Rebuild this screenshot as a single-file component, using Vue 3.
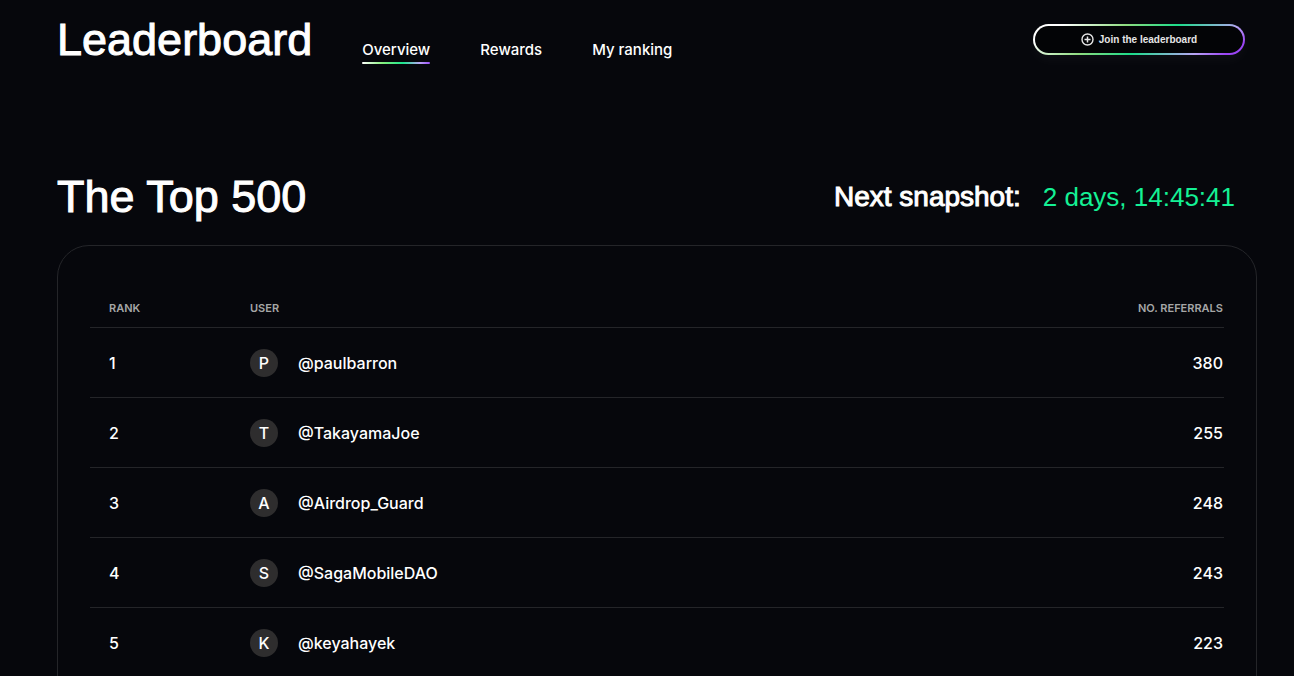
<script setup>
const tabs = ['Overview', 'Rewards', 'My ranking']
const rows = [
  { rank: 1, user: 'paulbarron', referrals: 380 },
  { rank: 2, user: 'TakayamaJoe', referrals: 255 },
  { rank: 3, user: 'Airdrop_Guard', referrals: 248 },
  { rank: 4, user: 'SagaMobileDAO', referrals: 243 },
  { rank: 5, user: 'keyahayek', referrals: 223 },
]
</script>

<template>
  <div class="page">
    <header class="top">
      <h1>Leaderboard</h1>
      <nav class="tabs">
        <a v-for="(tab, i) in tabs" :key="tab" href="#" :class="{ active: i === 0 }">{{ tab }}</a>
      </nav>
      <button type="button" class="join">
        <svg width="13" height="13" viewBox="0 0 13 13" fill="none" stroke="currentColor" aria-hidden="true">
          <circle cx="6.5" cy="6.5" r="5.5" stroke-width="1.4" />
          <path d="M6.5 3.5v6M3.5 6.5h6" stroke-width="1.5" />
        </svg>
        <span>Join the leaderboard</span>
      </button>
    </header>

    <main>
      <div class="heading">
        <h2>The Top 500</h2>
        <p class="snapshot">
          <span class="label">Next snapshot:</span>
          <span class="time">2 days, 14:45:41</span>
        </p>
      </div>
      <section class="card">
        <table>
          <thead>
            <tr>
              <th class="rank" scope="col">RANK</th>
              <th scope="col">USER</th>
              <th class="referrals" scope="col">NO. REFERRALS</th>
            </tr>
          </thead>
          <tbody>
            <tr v-for="row in rows" :key="row.rank">
              <td class="rank">{{ row.rank }}</td>
              <td>
                <div class="user">
                  <span class="avatar">{{ row.user[0].toUpperCase() }}</span>
                  <span>@{{ row.user }}</span>
                </div>
              </td>
              <td class="referrals">{{ row.referrals }}</td>
            </tr>
          </tbody>
        </table>
      </section>
    </main>
  </div>
</template>

<style>
body {
  background: #06070c;
}
</style>

<style scoped>
.page {
  box-sizing: border-box;
  height: 100vh;
  overflow: hidden;
  padding: 0 37px 0 57px;
  background: #06070c;
  color: #fff;
  font-family: Inter, "Liberation Sans", Arial, sans-serif;
  font-weight: 500;
}
h1,
h2,
p {
  margin: 0;
}
h1,
h2 {
  font-family: "Liberation Sans", Arial, sans-serif;
  font-size: 45px;
  line-height: 56px;
  font-weight: 400;
  -webkit-text-stroke: 1px currentColor;
}
.top {
  display: flex;
  align-items: flex-start;
  padding: 12px 12px 0 0;
}
.tabs {
  display: flex;
  gap: 50px;
  margin: 26px auto 0 50px;
}
.tabs a {
  color: #fff;
  font-size: 15px;
  line-height: 24px;
  text-decoration: none;
}
.tabs a.active::after {
  content: "";
  display: block;
  height: 2px;
  border-radius: 1px;
  background: linear-gradient(90deg, #fff, #86ef7d 30%, #1be78e 60%, #b9a5f5 85%, #9b4dfa);
}
.join {
  display: flex;
  align-items: center;
  justify-content: center;
  gap: 5px;
  width: 212px;
  height: 31px;
  margin-top: 12px;
  padding: 0;
  border: 2px solid transparent;
  border-radius: 16px;
  background:
    linear-gradient(#030406, #030406) padding-box,
    linear-gradient(148deg, #fff 12%, #8fdc80 36%, #1bdc8a 56%, #b9a5f5 80%, #9b45f5 92%) border-box;
  box-shadow: 0 6px 12px rgba(255, 255, 255, 0.03);
  color: #e6e6e6;
  font-family: "Liberation Sans", Arial, sans-serif;
  font-size: 10px;
  font-weight: 700;
}
.heading {
  display: flex;
  align-items: center;
  justify-content: space-between;
  margin-top: 101px;
  padding-right: 22px;
}
.snapshot {
  display: flex;
  gap: 22px;
  font-family: "Liberation Sans", Arial, sans-serif;
  font-size: 28px;
  line-height: 40px;
  font-weight: 400;
}
.label {
  -webkit-text-stroke: 1px currentColor;
}
.time {
  color: #14f195;
  font-size: 26px;
}
.card {
  margin-top: 20px;
  padding: 43px 32px 32px;
  border: 1px solid #242529;
  border-radius: 32px;
}
table {
  width: 100%;
  border-collapse: separate;
  border-spacing: 0;
}
th,
td {
  box-sizing: border-box;
  padding: 0;
  border-bottom: 1px solid #242529;
  text-align: left;
}
th {
  height: 39px;
  color: #a5a6a6;
  font-size: 11px;
  font-weight: 600;
}
td {
  height: 70px;
  font-size: 16px;
}
.rank {
  width: 160px;
  padding-left: 19px;
}
.referrals {
  padding-right: 1px;
  text-align: right;
}
.user {
  display: flex;
  align-items: center;
  gap: 20px;
}
.avatar {
  display: grid;
  place-items: center;
  width: 28px;
  height: 28px;
  border-radius: 50%;
  background: #2e2d2e;
}
</style>
